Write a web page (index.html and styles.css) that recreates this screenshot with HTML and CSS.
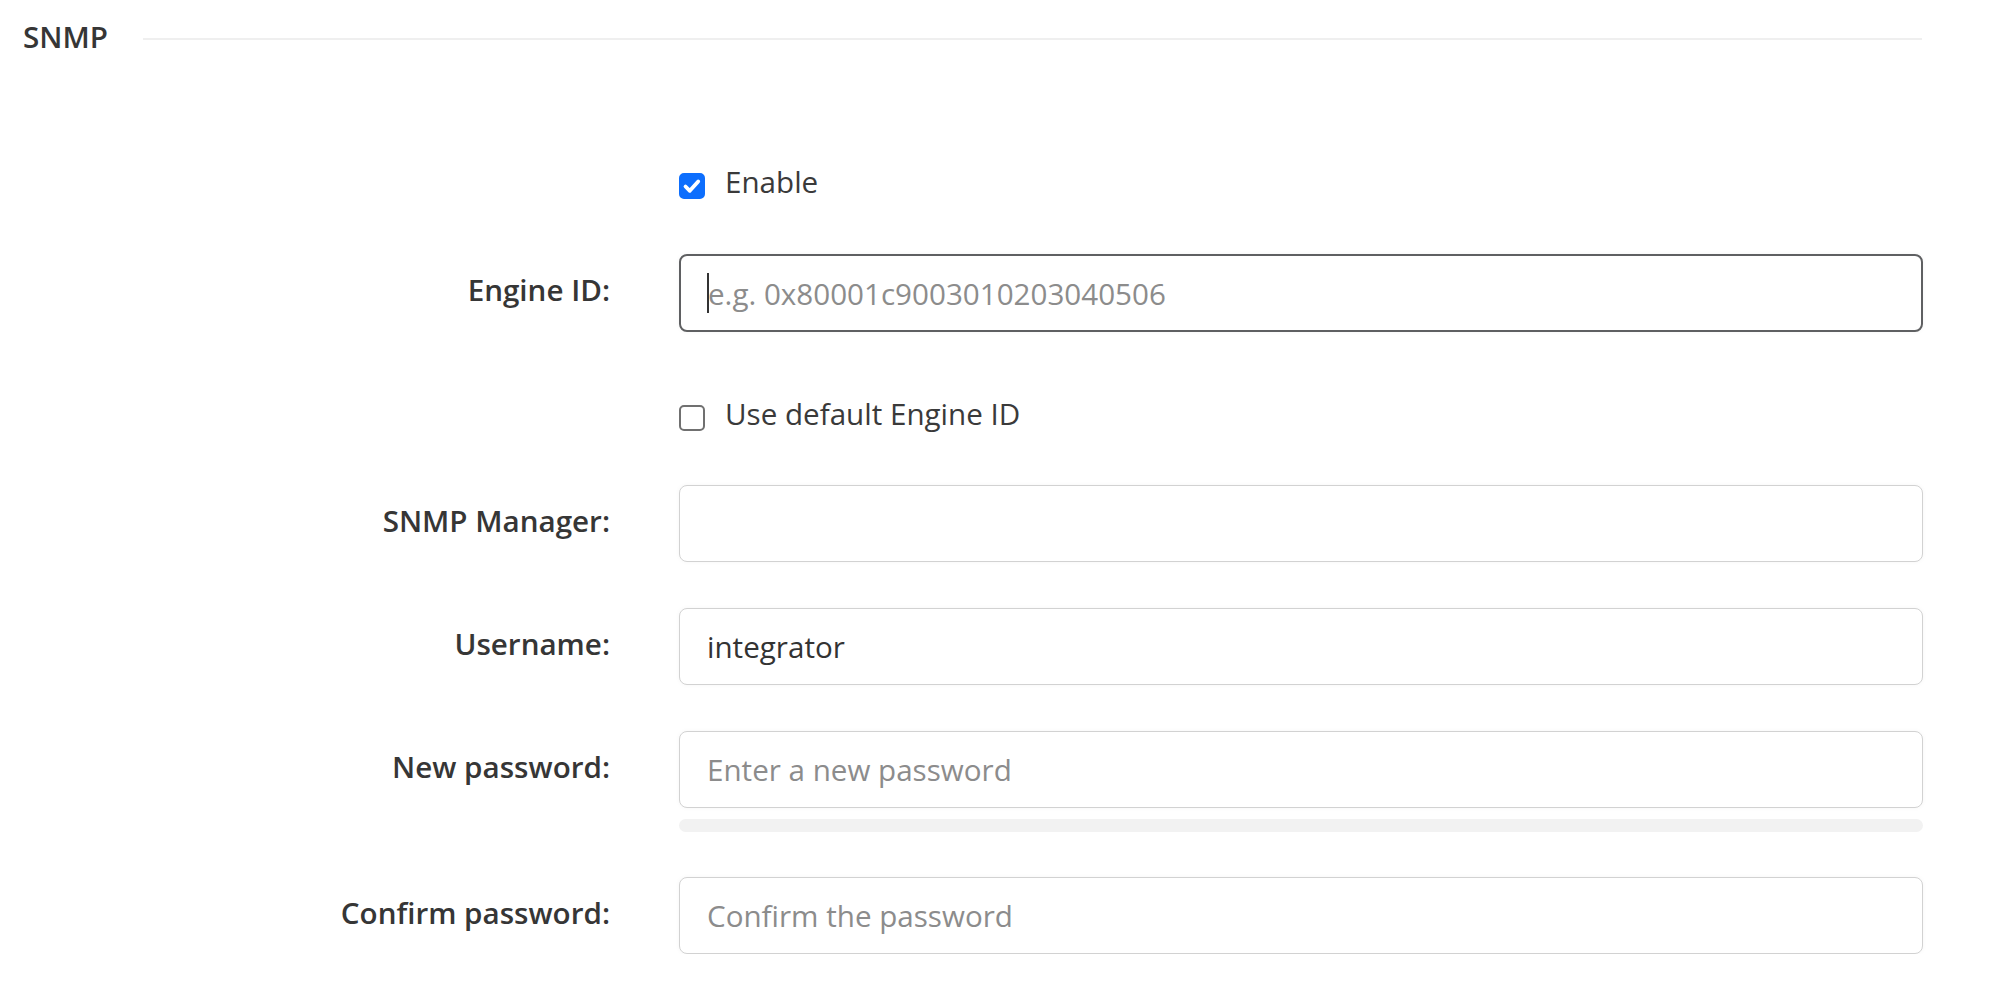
FILE: index.html
```html
<!DOCTYPE html>
<html>
<head>
  <title>SNMP</title>
  <link rel="stylesheet" href="styles.css">
</head>
<body>
  <div class="section-head">
    <span class="section-title">SNMP</span>
    <span class="section-rule"></span>
  </div>

  <form class="snmp-form">
    <div class="row row-enable">
      <div class="row-label"></div>
      <label class="check">
        <span class="box box-on">
          <svg width="26" height="26" viewBox="0 0 26 26"><path d="M6.5 13.5l4.3 4.3 8.4-9.4" fill="none" stroke="#fff" stroke-width="3.8" stroke-linecap="round" stroke-linejoin="round"/></svg>
        </span>
        Enable
      </label>
    </div>

    <div class="row row-engine">
      <label class="row-label" for="engineId">Engine ID:</label>
      <div class="field">
        <input class="text-input text-input-focus" type="text" id="engineId" placeholder="e.g. 0x80001c9003010203040506">
        <span class="caret"></span>
      </div>
    </div>

    <div class="row row-default">
      <div class="row-label"></div>
      <label class="check">
        <span class="box"></span>
        Use default Engine ID
      </label>
    </div>

    <div class="row row-manager">
      <label class="row-label" for="manager">SNMP Manager:</label>
      <div class="field">
        <input class="text-input" type="text" id="manager">
      </div>
    </div>

    <div class="row row-next">
      <label class="row-label" for="username">Username:</label>
      <div class="field">
        <input class="text-input" type="text" id="username" value="integrator">
      </div>
    </div>

    <div class="row row-next">
      <label class="row-label" for="newPassword">New password:</label>
      <div class="field">
        <input class="text-input" type="password" id="newPassword" placeholder="Enter a new password">
        <div class="strength"></div>
      </div>
    </div>

    <div class="row row-confirm">
      <label class="row-label" for="confirmPassword">Confirm password:</label>
      <div class="field">
        <input class="text-input" type="password" id="confirmPassword" placeholder="Confirm the password">
      </div>
    </div>
  </form>
</body>
</html>
```

FILE: styles.css
```css
body {
  margin: 0;
  padding: 0;
  background: #fff;
  font-family: "Open Sans", "Noto Sans", sans-serif;
  font-size: 29.6px;
  color: #333;
}

.section-head {
  display: flex;
  align-items: center;
  height: 40px;
  padding: 17px 86px 0 23px;
}

.section-title {
  font-weight: 600;
  line-height: 40px;
  color: #363636;
}

.section-rule {
  flex: 1;
  height: 2px;
  margin-left: 35px;
  margin-top: 3px;
  background: #efefef;
}

.snmp-form {
  margin: 0;
}

.row {
  display: grid;
  grid-template-columns: 610px 1fr;
  column-gap: 69px;
  margin-right: 85px;
  align-items: start;
}

.row-enable {
  margin-top: 105px;
}

.row-engine {
  margin-top: 52px;
}

.row-default {
  margin-top: 62px;
}

.row-manager {
  margin-top: 51px;
}

.row-next {
  margin-top: 46px;
}

.row-confirm {
  margin-top: 45px;
}

.row-label {
  text-align: right;
  font-weight: 600;
  line-height: 40px;
  padding-top: 16px;
  color: #363636;
}

.check {
  display: flex;
  align-items: flex-start;
  line-height: 40px;
  color: #3a3a3a;
}

.box {
  box-sizing: border-box;
  width: 26px;
  height: 26px;
  margin-top: 11px;
  margin-right: 20px;
  border: 2px solid #707070;
  border-radius: 5px;
  background: #fff;
}

.box svg {
  display: block;
  margin: -2px;
}

.box-on {
  border-color: #0d6efd;
  background: #0d6efd;
}

.field {
  position: relative;
}

.text-input {
  display: block;
  box-sizing: border-box;
  width: 100%;
  height: 77px;
  padding: 0 27px;
  border: 1.5px solid #d2d2d2;
  border-radius: 8px;
  box-shadow: 0 0 5px rgba(0, 0, 0, 0.04);
  font-family: inherit;
  font-size: 29.6px;
  color: #333;
  background: #fff;
  outline: none;
}

.text-input::placeholder {
  color: #8c8c8c;
}

.text-input-focus {
  height: 78px;
  border: 2px solid #5f6062;
}

.caret {
  position: absolute;
  left: 28px;
  top: 19px;
  width: 2px;
  height: 40px;
  background: #333;
}

.strength {
  height: 13px;
  margin-top: 11px;
  border-radius: 7px;
  background: #f2f2f2;
}
```
